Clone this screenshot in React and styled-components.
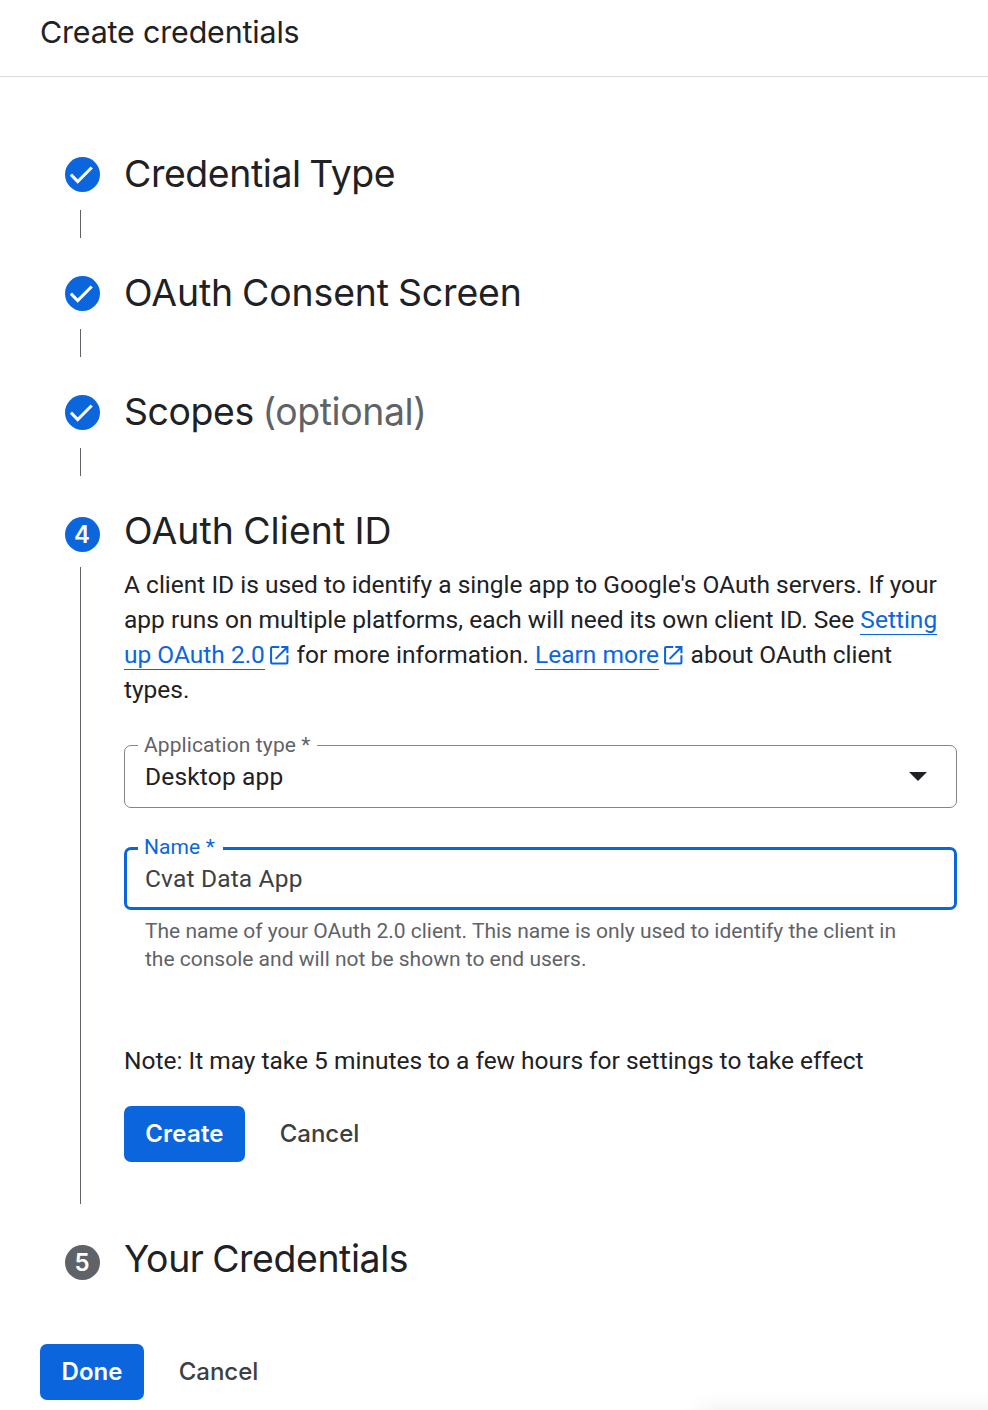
import React from 'react';
import styled, { createGlobalStyle } from 'styled-components';

const DISPLAY_FONT = "Inter, 'Liberation Sans', sans-serif";
const BODY_FONT = "Roboto, 'Liberation Sans', sans-serif";
const BLUE = '#0b66de';
const INK = '#202124';
const GREY = '#5f6368';

const GlobalStyle = createGlobalStyle`
  *, *::before, *::after { box-sizing: border-box; }
  body { margin: 0; background: #fff; }
`;

const Page = styled.div`
  position: relative;
  width: 988px;
  height: 1410px;
  overflow: hidden;
  background: #fff;
  color: ${INK};
  font: 400 24.5px/35px ${BODY_FONT};
`;

const Header = styled.header`
  display: flex;
  align-items: flex-start;
  height: 77px;
  padding: 14px 40px 0;
  border-bottom: 1px solid #dadce0;
`;

const PageTitle = styled.h1`
  margin: 0;
  font: 400 30.4px/36px ${DISPLAY_FONT};
  letter-spacing: -0.15px;
`;

const Stepper = styled.ol`
  display: flex;
  flex-direction: column;
  margin: 80px 0 0;
  padding: 0 31px 0 65px;
  list-style: none;
`;

const StepItem = styled.li`
  display: grid;
  grid-template-columns: 35px 1fr;
  column-gap: 24px;
  height: ${(p) => p.$height}px;
`;

const Rail = styled.div`
  display: flex;
  flex-direction: column;
  padding-top: ${(p) => (p.$numbered ? 3 : 0)}px;
  padding-bottom: 38px;
`;

const Marker = styled.span`
  display: flex;
  flex: none;
  align-items: center;
  justify-content: center;
  width: 35px;
  height: 35px;
  padding-right: ${(p) => (p.$numbered ? 1 : 0)}px;
  border-radius: 50%;
  background: ${(p) => (p.$muted ? GREY : BLUE)};
  color: #fff;
  font: 600 24px/35px ${DISPLAY_FONT};
`;

const Connector = styled.span`
  flex: 1;
  width: 1px;
  margin: ${(p) => (p.$numbered ? 15 : 18)}px 0 0 15px;
  background: ${GREY};
`;

const StepTitle = styled.h2`
  margin: -1px 0 0;
  font: 400 37.4px/35px ${DISPLAY_FONT};
  letter-spacing: ${(p) => p.$tracking || 0}px;
  word-spacing: -1.5px;
  white-space: nowrap;
`;

const Optional = styled.span`
  color: ${GREY};
`;

const Description = styled.p`
  margin: 19px 0 38px;
`;

const Link = styled.a`
  border-bottom: 1px solid ${BLUE};
  color: ${BLUE};
  text-decoration: none;
`;

const ExternalIcon = styled.svg`
  width: 24.5px;
  height: 24.5px;
  margin: 0 -1px 0 2px;
  vertical-align: -4px;
  fill: ${BLUE};
`;

const Field = styled.div`
  position: relative;
  display: flex;
  align-items: center;
  justify-content: space-between;
  height: 63px;
  padding: 0 ${(p) => (p.$focused ? 18 : 29)}px 0 ${(p) => (p.$focused ? 18 : 20)}px;
  border: ${(p) => (p.$focused ? `3px solid ${BLUE}` : '1px solid #80868b')};
  border-radius: 7px;
  color: ${(p) => (p.$focused ? '#3c4043' : INK)};
  letter-spacing: 0.17px;

  & + & { margin-top: 39px; }
`;

const FieldLabel = styled.label`
  position: absolute;
  top: ${(p) => (p.$focused ? -17 : -15)}px;
  left: ${(p) => (p.$focused ? 11 : 13)}px;
  padding: 0 ${(p) => (p.$focused ? 8.5 : 7)}px 0 6px;
  background: #fff;
  color: ${(p) => (p.$focused ? BLUE : GREY)};
  font-size: 21px;
  line-height: 28px;
  letter-spacing: 0.1px;
`;

const Arrow = styled.span`
  border: solid transparent;
  border-width: 9px 9px 0;
  border-top-color: ${INK};
`;

const Hint = styled.p`
  margin: 7px 0 70px;
  padding: 0 40px 0 21px;
  color: ${GREY};
  font-size: 21px;
  line-height: 28px;
`;

const Note = styled.p`
  margin: 0 0 28px;
`;

const Actions = styled.div`
  display: flex;
  gap: 14px;
  margin: ${(p) => p.$margin || 0};
`;

const Button = styled.button`
  width: ${(p) => p.$width}px;
  height: 56px;
  padding: 0;
  border: 0;
  border-radius: 7px;
  background: ${(p) => (p.$primary ? BLUE : 'transparent')};
  color: ${(p) => (p.$primary ? '#fff' : '#3c4043')};
  font: ${(p) => (p.$primary ? 600 : 500)} 24px/56px ${DISPLAY_FONT};
  letter-spacing: ${(p) => p.$tracking || 0}px;
`;

const BottomSheet = styled.div`
  position: absolute;
  top: 1412px;
  left: 700px;
  width: 400px;
  height: 60px;
  border-radius: 8px;
  box-shadow: 0 0 26px rgba(0, 0, 0, 0.09);
`;

function Check() {
  return (
    <svg width="35" height="35" viewBox="0 0 35 35" fill="none" stroke="#fff" strokeWidth="3.1">
      <path d="M5.9 17.7 12.7 24.5 26.7 10.5" />
    </svg>
  );
}

function External() {
  return (
    <ExternalIcon viewBox="0 0 24 24">
      <path d="M19 19H5V5h7V3H5a2 2 0 0 0-2 2v14a2 2 0 0 0 2 2h14a2 2 0 0 0 2-2v-7h-2v7zM14 3v2h3.59l-9.83 9.83 1.41 1.41L19 6.41V10h2V3h-7z" />
    </ExternalIcon>
  );
}

function Step({ number, title, tracking, height, last, children }) {
  const numbered = Boolean(number);
  return (
    <StepItem $height={height}>
      <Rail $numbered={numbered}>
        <Marker $muted={last} $numbered={numbered}>{number || <Check />}</Marker>
        {!last && <Connector $numbered={numbered} />}
      </Rail>
      <div>
        <StepTitle $tracking={tracking}>{title}</StepTitle>
        {children}
      </div>
    </StepItem>
  );
}

export default function App() {
  return (
    <Page>
      <GlobalStyle />
      <Header>
        <PageTitle>Create credentials</PageTitle>
      </Header>
      <Stepper>
        <Step title="Credential Type" height={119} tracking={-0.4} />
        <Step title="OAuth Consent Screen" height={119} tracking={-0.1} />
        <Step title={<>Scopes <Optional>(optional)</Optional></>} height={119} tracking={-0.4} />
        <Step number="4" title="OAuth Client ID" height={728} tracking={0.1}>
          <Description>
            A client ID is used to identify a single app to Google's OAuth servers. If your
            app runs on multiple platforms, each will need its own client ID. See{' '}
            <Link>Setting up OAuth 2.0</Link>
            <External /> for more information. <Link>Learn more</Link>
            <External /> about OAuth client types.
          </Description>
          <Field>
            <FieldLabel>Application type *</FieldLabel>
            <span>Desktop app</span>
            <Arrow />
          </Field>
          <Field $focused>
            <FieldLabel $focused>Name *</FieldLabel>
            <span>Cvat Data App</span>
          </Field>
          <Hint>
            The name of your OAuth 2.0 client. This name is only used to identify the client in
            the console and will not be shown to end users.
          </Hint>
          <Note>Note: It may take 5 minutes to a few hours for settings to take effect</Note>
          <Actions>
            <Button $primary $width={121} $tracking={0.2}>Create</Button>
            <Button $width={121}>Cancel</Button>
          </Actions>
        </Step>
        <Step number="5" title="Your Credentials" height={35} tracking={-0.4} last />
      </Stepper>
      <Actions $margin="67px 0 0 40px">
        <Button $primary $width={104}>Done</Button>
        <Button $width={121}>Cancel</Button>
      </Actions>
      <BottomSheet />
    </Page>
  );
}
